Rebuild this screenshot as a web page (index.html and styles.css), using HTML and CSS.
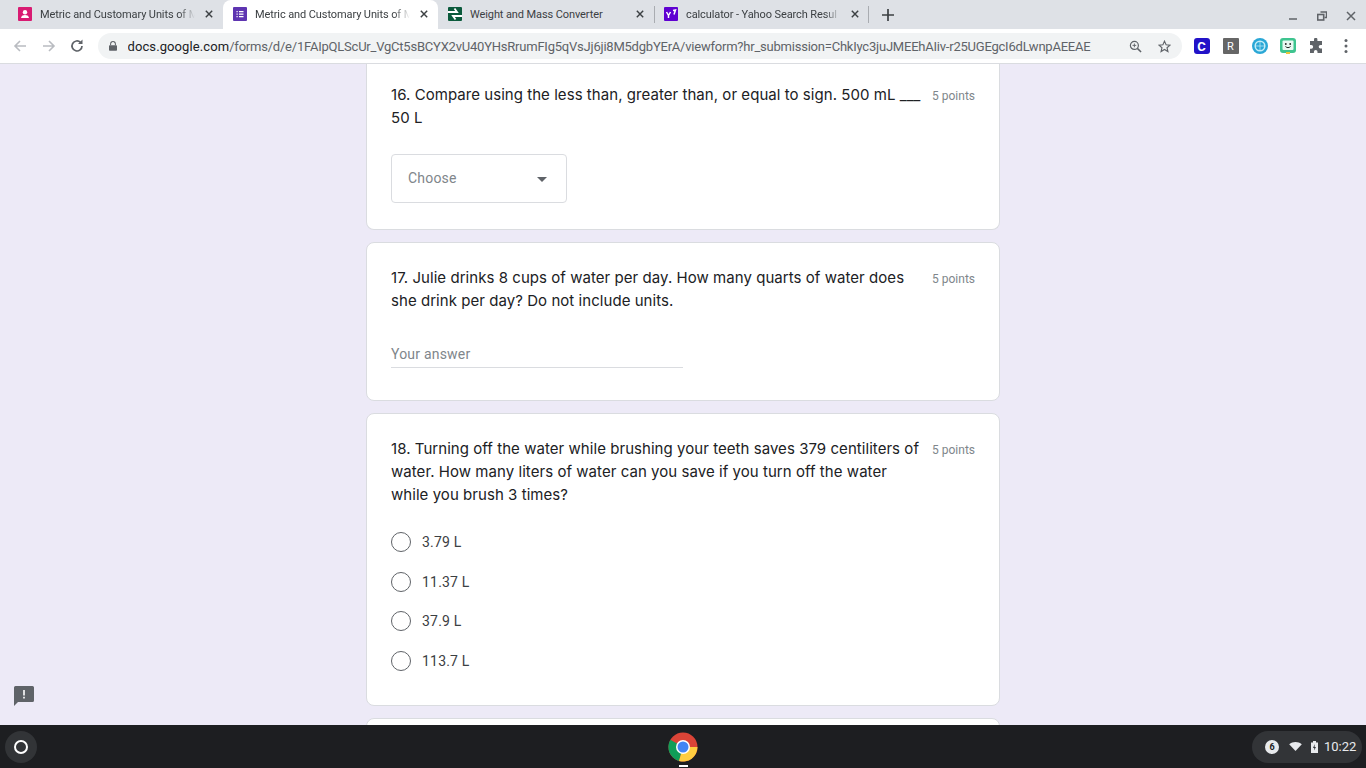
FILE: index.html
```html
<!DOCTYPE html>
<html lang="en">
<head>
<meta charset="utf-8">
<title>Metric and Customary Units</title>
<link rel="stylesheet" href="styles.css">
</head>
<body>
<div class="screen">
  <header class="tabstrip">
    <div class="tab">
      <svg class="fav" viewBox="0 0 14 14"><rect width="14" height="14" rx="1" fill="#d81b72"/><circle cx="7" cy="5.2" r="2.2" fill="#fff"/><path d="M3 11c.5-2.4 2-3 4-3s3.500.6 4 3z" fill="#fff"/></svg>
      <span class="tab-title">Metric and Customary Units of M</span>
      <svg class="tab-x" viewBox="0 0 10 10"><path d="M1 1l8 8M9 1l-8 8" stroke="#3c4043" stroke-width="1.8"/></svg>
    </div>
    <div class="tab tab-active">
      <svg class="fav" viewBox="0 0 14 14"><rect width="14" height="14" rx="1" fill="#5e35b1"/><path d="M3.500 4h1.200v1.200H3.500zM6 4h4.500v1.200H6zM3.500 6.500h1.200v1.200H3.500zM6 6.500h4.500v1.200H6zM3.500 9h1.200v1.200H3.500zM6 9h4.500v1.200H6z" fill="#fff"/></svg>
      <span class="tab-title">Metric and Customary Units of M</span>
      <svg class="tab-x" viewBox="0 0 10 10"><path d="M1 1l8 8M9 1l-8 8" stroke="#3c4043" stroke-width="1.8"/></svg>
    </div>
    <div class="tab">
      <svg class="fav" viewBox="0 0 14 14"><rect width="14" height="14" rx="1" fill="#0b5a3c"/><path d="M0 5h9L6.500 1.500M14 9H5l2.500 3.500" fill="none" stroke="#fff" stroke-width="1.800"/></svg>
      <span class="tab-title">Weight and Mass Converter</span>
      <svg class="tab-x" viewBox="0 0 10 10"><path d="M1 1l8 8M9 1l-8 8" stroke="#3c4043" stroke-width="1.8"/></svg>
    </div>
    <div class="tab tab-sep">
      <svg class="fav" viewBox="0 0 14 14"><rect width="14" height="14" rx="1" fill="#5f01d1"/><path d="M2.500 5l2 3.500V11M6.500 5l-2 3.500M9 3.500l2.500-.5-1.500 4.500" fill="none" stroke="#fff" stroke-width="1.500"/></svg>
      <span class="tab-title">calculator - Yahoo Search Resul</span>
      <svg class="tab-x" viewBox="0 0 10 10"><path d="M1 1l8 8M9 1l-8 8" stroke="#3c4043" stroke-width="1.8"/></svg>
    </div>
    <div class="new-tab">
      <svg class="plus" viewBox="0 0 12 12"><path d="M6 0v12M0 6h12" stroke="#3c4043" stroke-width="1.700"/></svg>
    </div>
    <div class="win-controls">
      <svg class="win" viewBox="0 0 10 10"><path d="M1 8h8" stroke="#5f6368" stroke-width="1.500"/></svg>
      <svg class="win" viewBox="0 0 10 10"><path d="M3.500 1h6v5.500h-2" fill="none" stroke="#5f6368" stroke-width="1.400"/><rect x=".7" y="3.500" width="6" height="5.500" fill="none" stroke="#5f6368" stroke-width="1.600"/></svg>
      <svg class="win" viewBox="0 0 10 10"><path d="M1 1l8 8M9 1l-8 8" stroke="#5f6368" stroke-width="1.500"/></svg>
    </div>
  </header>

  <nav class="toolbar">
    <svg class="nav-icon" viewBox="0 0 16 16"><path d="M14 8H3M8 3L3 8l5 5" fill="none" stroke="#b9bcc1" stroke-width="1.600"/></svg>
    <svg class="nav-icon" viewBox="0 0 16 16"><path d="M2 8h11M8 3l5 5-5 5" fill="none" stroke="#b9bcc1" stroke-width="1.600"/></svg>
    <svg class="nav-icon" viewBox="0 0 16 16"><path d="M13 8a5 5 0 1 1-1.500-3.600" fill="none" stroke="#5f6368" stroke-width="1.700"/><path d="M13.500 1.500v4.500H9z" fill="#5f6368"/></svg>
    <div class="omnibox">
      <svg class="lock" viewBox="0 0 10 12"><path d="M2 5V3.500a3 3 0 0 1 6 0V5" fill="none" stroke="#5f6368" stroke-width="1.300"/><rect y="5" width="10" height="7" rx="1" fill="#5f6368"/></svg>
      <span class="url"><span class="url-host">docs.google.com</span>/forms/d/e/1FAIpQLScUr_VgCt5sBCYX2vU40YHsRrumFIg5qVsJj6ji8M5dgbYErA/viewform?hr_submission=ChkIyc3juJMEEhAIiv-r25UGEgcI6dLwnpAEEAE</span>
      <svg class="omni-icon" viewBox="0 0 14 14"><circle cx="5.800" cy="5.800" r="4.300" fill="none" stroke="#5f6368" stroke-width="1.300"/><path d="M9 9l4 4" stroke="#5f6368" stroke-width="1.600"/><path d="M3.800 5.800h4M5.800 3.800v4" stroke="#5f6368"/></svg>
      <svg class="omni-icon" viewBox="0 0 14 14"><path d="M7 1.200l1.700 3.900 4.200.4-3.200 2.800 1 4.100L7 10.200l-3.700 2.200 1-4.100L1.100 5.500l4.200-.4z" fill="none" stroke="#5f6368" stroke-width="1.200"/></svg>
    </div>
    <div class="extensions">
      <span class="ext ext-c">C</span>
      <span class="ext ext-r">R</span>
      <svg class="ext-svg" viewBox="0 0 16 16"><circle cx="8" cy="8" r="8" fill="#2aa7d6"/><circle cx="8" cy="8" r="4.800" fill="none" stroke="#c5eef8" stroke-width="1.500"/><path d="M8 3.200v9.600M3.200 8h9.600" stroke="#c5eef8" stroke-width=".7"/></svg>
      <svg class="ext-svg ext-tight" viewBox="0 0 16 16"><rect width="16" height="15" rx="3" fill="#3ec48f"/><rect x="2.500" y="2.500" width="11" height="9.500" rx="1" fill="#e9f8f2"/><circle cx="5.800" cy="6" r=".9" fill="#222"/><circle cx="10.200" cy="6" r=".9" fill="#222"/><path d="M5.500 8.500c1.500 1.500 3.500 1.500 5 0" fill="none" stroke="#222"/><rect x="6" y="14" width="4" height="2" fill="#e8c43c"/></svg>
      <svg class="ext-svg ext-tight" viewBox="0 0 16 16"><path d="M6 1.500a1.700 1.700 0 0 1 3.400 0V3H14v4h-1.500a1.800 1.800 0 0 0 0 3.600H14V15H9.500v-1.300a1.800 1.800 0 0 0-3.600 0V15H2v-4.300h1.300a1.800 1.800 0 0 0 0-3.700H2V3h4z" fill="#5f6368"/></svg>
      <svg class="ext-svg ext-menu" viewBox="0 0 16 16"><circle cx="8" cy="2.500" r="1.500" fill="#5f6368"/><circle cx="8" cy="8" r="1.500" fill="#5f6368"/><circle cx="8" cy="13.500" r="1.500" fill="#5f6368"/></svg>
    </div>
  </nav>

  <main class="page">
    <div class="form">
      <section class="card card-first">
        <div class="q-head">
          <p class="q-text">16. Compare using the less than, greater than, or equal to sign. 500 mL ___ 50 L</p>
          <span class="points">5 points</span>
        </div>
        <div class="select">
          <span class="select-label">Choose</span>
          <span class="caret"></span>
        </div>
      </section>
      <section class="card card-text">
        <div class="q-head">
          <p class="q-text">17. Julie drinks 8 cups of water per day. How many quarts of water does she drink per day? Do not include units.</p>
          <span class="points">5 points</span>
        </div>
        <div class="answer">Your answer</div>
      </section>
      <section class="card card-radio">
        <div class="q-head">
          <p class="q-text">18. Turning off the water while brushing your teeth saves 379 centiliters of water. How many liters of water can you save if you turn off the water while you brush 3 times?</p>
          <span class="points">5 points</span>
        </div>
        <ul class="options">
          <li class="option"><span class="radio"></span>3.79 L</li>
          <li class="option"><span class="radio"></span>11.37 L</li>
          <li class="option"><span class="radio"></span>37.9 L</li>
          <li class="option"><span class="radio"></span>113.7 L</li>
        </ul>
      </section>
      <section class="card card-next"></section>
    </div>
    <svg class="feedback" viewBox="0 0 20 20"><path d="M0 1.500A1.500 1.500 0 0 1 1.500 0h17A1.500 1.500 0 0 1 20 1.500v13a1.500 1.500 0 0 1-1.500 1.500H4l-4 4z" fill="#5f6368"/><path d="M9.200 4h1.600v5.500H9.200zM9.200 10.800h1.600v1.700H9.200z" fill="#fff"/></svg>
  </main>

  <footer class="shelf">
    <div class="launcher"><span class="launcher-ring"></span></div>
    <div class="shelf-center">
      <svg class="chrome" viewBox="0 0 30 30">
        <circle cx="15" cy="15" r="14.500" fill="#db4437"/>
        <path d="M15 15L2.400 7.700A14.500 14.500 0 0 0 11 29z" fill="#0f9d58"/>
        <path d="M15 15h14.500A14.500 14.500 0 0 1 11 29z" fill="#ffcd40"/>
        <circle cx="15" cy="15" r="7" fill="#fff"/>
        <circle cx="15" cy="15" r="5.500" fill="#4285f4"/>
      </svg>
      <span class="running"></span>
    </div>
    <div class="tray">
      <span class="badge">6</span>
      <svg class="wifi" viewBox="0 0 14 10"><path d="M0 2.500C4-.8 10-.8 14 2.500L7 10z" fill="#e8eaed"/></svg>
      <svg class="battery" viewBox="0 0 7 12"><path d="M2 0h3v1.500h2V12H0V1.500h2z" fill="#e8eaed"/><path d="M3.800 3L2 7h1.300l-.2 2.500L5 6H3.600z" fill="#33363a"/></svg>
      <span class="clock">10:22</span>
    </div>
  </footer>
</div>
</body>
</html>
```

FILE: styles.css
```css
* { box-sizing: border-box; }
html, body { margin: 0; padding: 0; height: 100%; overflow: hidden; }
body { font-family: Roboto, "Liberation Sans", sans-serif; }

.screen { width: 1366px; height: 768px; display: flex; flex-direction: column; overflow: hidden; }

/* tab strip */
.tabstrip { height: 29px; background: #dee1e6; display: flex; align-items: stretch; padding-left: 8px; flex: none; }
.tab { width: 215px; display: flex; align-items: center; padding: 0 10px 2px 10px; position: relative; }
.tab:nth-child(3) { width: 216px; }
.tab-active { background: #fff; border-radius: 8px 8px 0 0; }
.tab-sep::before, .tab-sep::after { content: ""; position: absolute; top: 6px; height: 17px; width: 1px; background: #a9acb1; }
.tab-sep::before { left: 0; }
.tab-sep::after { right: 0; }
.fav { width: 14px; height: 14px; flex: none; margin-right: 8px; }
.tab-title { flex: 1; min-width: 0; white-space: nowrap; overflow: hidden; font: 11px/15px Roboto, sans-serif; letter-spacing: -.1px; padding-top: 2px; color: #3c4043; -webkit-mask-image: linear-gradient(to right, #000 88%, transparent 98%); mask-image: linear-gradient(to right, #000 88%, transparent 98%); }
.tab:nth-child(3) .tab-title { -webkit-mask-image: none; mask-image: none; }
.tab-x { width: 8px; height: 8px; flex: none; margin-left: 7px; }
.new-tab { width: 38px; display: flex; align-items: center; justify-content: center; }
.plus { width: 12px; height: 12px; }
.win-controls { margin-left: auto; display: flex; align-items: center; gap: 19px; padding-right: 10px; padding-top: 3px; }
.win { width: 10px; height: 10px; }

/* toolbar */
.toolbar { height: 35px; background: #fff; border-bottom: 1px solid #dadce0; display: flex; align-items: center; flex: none; padding-left: 12px; }
.nav-icon { width: 16px; height: 16px; margin-right: 12.500px; flex: none; }
.omnibox { width: 1084px; height: 26px; background: #f1f3f4; border-radius: 13px; display: flex; align-items: center; padding-left: 11px; flex: none; }
.lock { width: 8px; height: 10px; flex: none; margin-right: 11px; }
.url { font: 13px/16px Roboto, sans-serif; color: #5f6368; white-space: nowrap; width: 1001px; flex: none; overflow: hidden; letter-spacing: -.22px; padding-top: 1px; }
.url-host { color: #202124; letter-spacing: .1px; }
.omni-icon { width: 13px; height: 13px; flex: none; margin-right: 16px; }
.extensions { display: flex; align-items: center; gap: 13px; margin-left: 12px; }
.ext { width: 16px; height: 16px; display: flex; align-items: center; justify-content: center; font: 700 11px Roboto, sans-serif; color: #fff; flex: none; }
.ext-c { background: #2212c8; border-radius: 3px; font-size: 13px; }
.ext-r { background: #666; font-weight: 400; border-radius: 1px; }
.ext-svg { width: 16px; height: 16px; flex: none; }
.ext-tight { margin-left: -1px; }
.ext-menu { margin-left: 1px; }

/* page */
.page { flex: 1; min-height: 0; background: #edeaf7; position: relative; overflow: hidden; }
.form { width: 634px; margin: 0 auto; display: flex; flex-direction: column; gap: 12px; }
.card { background: #fff; border: 1px solid #dadce0; border-radius: 8px; padding: 24px 24px 0; flex: none; }
.card-first { height: 187px; margin-top: -21px; border-top: 0; padding-top: 41px; }
.card-text { height: 159px; }
.card-radio { height: 293px; }
.card-next { height: 60px; }
.q-head { display: flex; justify-content: space-between; align-items: flex-start; gap: 8px; }
.q-text { margin: -1px 0 0; width: 534px; font: 15px/23px Inter, sans-serif; letter-spacing: .05px; color: #202124; }
.points { font: 12px/18px Roboto, sans-serif; color: #80868b; white-space: nowrap; padding-top: 3px; }
.select { width: 176px; height: 49px; margin-top: 25px; border: 1px solid #dadce0; border-radius: 4px; display: flex; align-items: center; justify-content: space-between; padding: 0 19px 0 16px; font: 14px Roboto, sans-serif; color: #80868b; letter-spacing: .2px; }
.select-label { padding-bottom: 2px; }
.caret { width: 0; height: 0; border-left: 5px solid transparent; border-right: 5px solid transparent; border-top: 5px solid #5f6368; margin-top: 2px; }
.answer { width: 292px; height: 25px; margin-top: 31px; border-bottom: 1px solid #dadce0; font: 14px/22px Roboto, sans-serif; color: #80868b; letter-spacing: .2px; }
.options { list-style: none; margin: 16px 0 0; padding: 0; display: flex; flex-direction: column; }
.option { height: 39.700px; display: flex; align-items: center; gap: 11px; font: 14px Roboto, sans-serif; color: #3c4043; letter-spacing: .2px; }
.radio { width: 20px; height: 20px; border: 1.500px solid #5f6368; border-radius: 50%; flex: none; }
.feedback { position: absolute; left: 14px; top: 622px; width: 20px; height: 20px; }

/* shelf */
.shelf { height: 43px; background: #1d1e21; flex: none; display: grid; grid-template-columns: 1fr auto 1fr; align-items: center; }
.launcher { width: 32px; height: 32px; margin-left: 5px; border-radius: 50%; background: #323437; display: flex; align-items: center; justify-content: center; }
.launcher-ring { width: 14px; height: 14px; border: 2px solid #fff; border-radius: 50%; }
.shelf-center { display: flex; flex-direction: column; align-items: center; position: relative; }
.chrome { width: 30px; height: 30px; }
.running { position: absolute; bottom: -5px; width: 9px; height: 2px; background: #fff; }
.tray { justify-self: end; height: 32px; margin-right: 4px; border-radius: 16px; background: #323437; display: flex; align-items: center; padding: 0 0 0 13px; color: #e8eaed; font: 13px Roboto, sans-serif; width: 110px; }
.badge { width: 14px; height: 14px; border-radius: 50%; background: #e8eaed; color: #202124; font: 700 9px/14px Roboto, sans-serif; text-align: center; flex: none; }
.wifi { width: 13px; height: 9px; margin-left: 10px; flex: none; }
.battery { width: 7px; height: 12px; margin-left: 9px; flex: none; }
.clock { margin-left: 6px; }
```
